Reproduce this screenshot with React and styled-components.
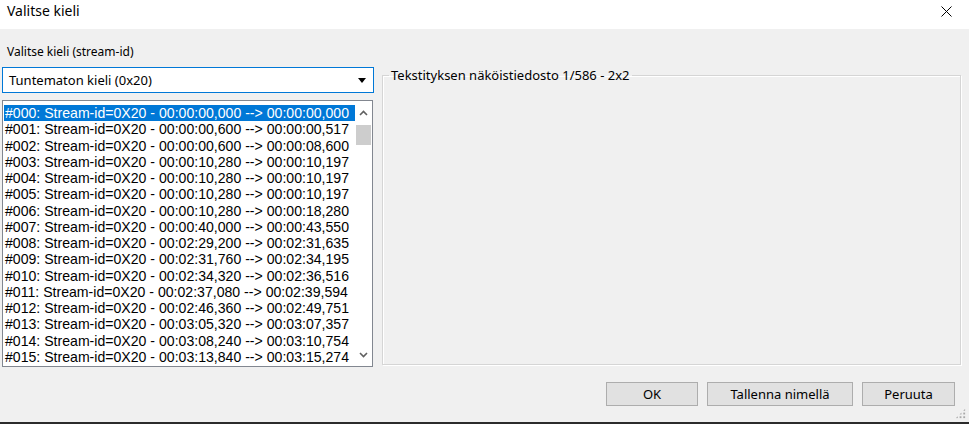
import React from 'react'
import styled, { createGlobalStyle } from 'styled-components'

const GlobalStyle = createGlobalStyle`
  html, body {
    margin: 0;
    padding: 0;
    background: #f0f0f0;
  }
  * { box-sizing: border-box; }
`

const uiFont = `"Noto Sans", "Open Sans", sans-serif`
const listFont = `"Liberation Sans", Arial, sans-serif`

const Window = styled.div`
  width: 969px;
  height: 424px;
  display: flex;
  flex-direction: column;
  background: #f0f0f0;
  font-family: ${uiFont};
  color: #000;
  overflow: hidden;
`

const TitleBar = styled.div`
  height: 29px;
  flex: none;
  background: #fff;
  display: flex;
  align-items: center;
  justify-content: space-between;
  padding-left: 7px;
`

const Title = styled.span`
  font-size: 14px;
  line-height: 1;
  margin-top: -7px;
`

const CloseButton = styled.button`
  width: 46px;
  height: 29px;
  border: none;
  background: transparent;
  display: flex;
  align-items: center;
  justify-content: center;
  padding: 0;
  margin-top: -7px;
`

const Body = styled.div`
  flex: 1;
  display: flex;
  flex-direction: column;
  padding: 15px 8px 0 2px;
  border-bottom: 2px solid #2b2b2b;
  position: relative;
`

const Main = styled.div`
  display: flex;
  gap: 8px;
`

const LeftColumn = styled.div`
  width: 372px;
  display: flex;
  flex-direction: column;
`

const FieldLabel = styled.div`
  font-size: 12px;
  line-height: 16px;
  padding-left: 5px;
  margin-bottom: 7px;
`

const Combo = styled.div`
  height: 26px;
  border: 1px solid #0078d7;
  background: #fff;
  display: flex;
  align-items: center;
  justify-content: space-between;
  padding: 0 6px 0 6px;
  font-size: 13px;
  margin-bottom: 7px;
`

const ComboArrow = styled.span`
  width: 0;
  height: 0;
  border-left: 4px solid transparent;
  border-right: 4px solid transparent;
  border-top: 5px solid #000;
  margin-right: 1px;
`

const ListBox = styled.div`
  height: 267px;
  width: 371px;
  border: 1px solid #828790;
  background: #fff;
  display: flex;
  padding: 0 0 1px 1px;
`

const Items = styled.div`
  flex: 1;
  overflow: hidden;
  padding-top: 4px;
`

const Item = styled.div`
  height: 16.27px;
  line-height: 16.27px;
  padding-left: 1px;
  font-family: ${listFont};
  font-size: 14.1px;
  white-space: nowrap;
  background: ${p => (p.$selected ? '#0078d7' : 'transparent')};
  color: ${p => (p.$selected ? '#fff' : '#000')};
`

const ScrollBar = styled.div`
  width: 17px;
  flex: none;
  display: flex;
  flex-direction: column;
  background: #fff;
  padding-top: 2px;
`

const ScrollArrow = styled.div`
  height: 20px;
  display: flex;
  align-items: center;
  justify-content: center;
`

const ScrollTrack = styled.div`
  flex: 1;
  padding: 2px 1px 0 1px;
`

const Thumb = styled.div`
  height: 20px;
  background: #cdcdcd;
`

const GroupBox = styled.fieldset`
  flex: 1;
  margin: 23px 0 0 0;
  height: 298px;
  border: 1px solid #d5d5d5;
  box-shadow: inset 1px 1px 0 #fff, 1px 1px 0 #fff;
  padding: 0;
`

const GroupLegend = styled.legend`
  font-size: 13px;
  padding: 0 2px;
  margin-left: 6px;
  line-height: 16px;
`

const Footer = styled.div`
  display: flex;
  justify-content: flex-end;
  gap: 9px;
  padding-top: 15px;
  padding-right: 6px;
`

const Button = styled.button`
  width: ${p => p.$w}px;
  height: 24px;
  background: #e1e1e1;
  border: 1px solid #adadad;
  font-family: ${uiFont};
  font-size: 13px;
  color: #000;
  padding: 0;
`

const Grip = styled.div`
  position: absolute;
  right: 3px;
  bottom: 3px;
  width: 11px;
  height: 11px;
  background-image: radial-gradient(circle, #a8a8a8 0.9px, transparent 1.1px);
  background-size: 3.7px 3.7px;
  clip-path: polygon(100% 0, 100% 100%, 0 100%);
`

const rows = [
  ['000', '00:00:00,000', '00:00:00,000'],
  ['001', '00:00:00,600', '00:00:00,517'],
  ['002', '00:00:00,600', '00:00:08,600'],
  ['003', '00:00:10,280', '00:00:10,197'],
  ['004', '00:00:10,280', '00:00:10,197'],
  ['005', '00:00:10,280', '00:00:10,197'],
  ['006', '00:00:10,280', '00:00:18,280'],
  ['007', '00:00:40,000', '00:00:43,550'],
  ['008', '00:02:29,200', '00:02:31,635'],
  ['009', '00:02:31,760', '00:02:34,195'],
  ['010', '00:02:34,320', '00:02:36,516'],
  ['011', '00:02:37,080', '00:02:39,594'],
  ['012', '00:02:46,360', '00:02:49,751'],
  ['013', '00:03:05,320', '00:03:07,357'],
  ['014', '00:03:08,240', '00:03:10,754'],
  ['015', '00:03:13,840', '00:03:15,274'],
]

const Chevron = ({ up }) => (
  <svg width="9" height="6" viewBox="0 0 9 6">
    <path
      d={up ? 'M1 5 L4.5 1.5 L8 5' : 'M1 1 L4.5 4.5 L8 1'}
      fill="none"
      stroke="#606060"
      strokeWidth="1.6"
    />
  </svg>
)

export default function App() {
  return (
    <>
      <GlobalStyle />
      <Window>
        <TitleBar>
          <Title>Valitse kieli</Title>
          <CloseButton aria-label="Sulje">
            <svg width="11" height="11" viewBox="0 0 11 11">
              <path d="M0.5 0.5 L10.5 10.5 M10.5 0.5 L0.5 10.5" stroke="#000" strokeWidth="1" />
            </svg>
          </CloseButton>
        </TitleBar>
        <Body>
          <Main>
            <LeftColumn>
              <FieldLabel>Valitse kieli (stream-id)</FieldLabel>
              <Combo>
                <span>Tuntematon kieli (0x20)</span>
                <ComboArrow />
              </Combo>
              <ListBox>
                <Items>
                  {rows.map(([n, a, b], i) => (
                    <Item key={n} $selected={i === 0}>
                      #{n}: Stream-id=0X20 - {a} --&gt; {b}
                    </Item>
                  ))}
                </Items>
                <ScrollBar>
                  <ScrollArrow><Chevron up /></ScrollArrow>
                  <ScrollTrack><Thumb /></ScrollTrack>
                  <ScrollArrow><Chevron /></ScrollArrow>
                </ScrollBar>
              </ListBox>
            </LeftColumn>
            <GroupBox>
              <GroupLegend>Tekstityksen näköistiedosto 1/586 - 2x2</GroupLegend>
            </GroupBox>
          </Main>
          <Footer>
            <Button $w={92}>OK</Button>
            <Button $w={146}>Tallenna nimellä</Button>
            <Button $w={93}>Peruuta</Button>
          </Footer>
          <Grip />
        </Body>
      </Window>
    </>
  )
}
